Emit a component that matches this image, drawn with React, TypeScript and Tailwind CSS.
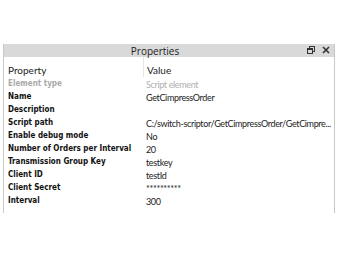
const rows: { label: string; value: string; dim?: boolean }[] = [
  { label: "Element type", value: "Script element", dim: true },
  { label: "Name", value: "GetCimpressOrder" },
  { label: "Description", value: "" },
  { label: "Script path", value: "C:/switch-scriptor/GetCimpressOrder/GetCimpre..." },
  { label: "Enable debug mode", value: "No" },
  { label: "Number of Orders per Interval", value: "20" },
  { label: "Transmission Group Key", value: "testkey" },
  { label: "Client ID", value: "testId" },
  { label: "Client Secret", value: "**********" },
  { label: "Interval", value: "300" },
];

export default function App() {
  return (
    <div className="w-[340px] h-[260px] bg-white pt-[44px] pl-[3px]">
      <div className="w-[332px] border-x border-[#c8c8c8] bg-white">
        <div className="h-[13px] bg-[#d9d9d9] flex items-center relative">
          <span className="flex-1 text-center text-[10px] leading-none text-[#222] font-['Open_Sans',sans-serif] mr-[28px]">
            Properties
          </span>
          <div className="absolute right-[4px] top-[2px] flex items-center gap-[7px]">
            <svg width="8" height="8" viewBox="0 0 8 8">
              <rect x="2.5" y="0.5" width="5" height="5" fill="none" stroke="#333" />
              <rect x="0" y="2" width="6" height="6" fill="#333" />
              <rect x="1" y="4" width="4" height="3" fill="#d9d9d9" />
            </svg>
            <svg width="8" height="8" viewBox="0 0 8 8">
              <path d="M1 1 L7 7 M7 1 L1 7" stroke="#333" strokeWidth="1.6" />
            </svg>
          </div>
        </div>
        <div className="flex h-[20px] font-['Lato',sans-serif] text-[10px] text-[#222]">
          <span className="w-[139px] pl-[4px] pt-[6px]">Property</span>
          <span className="pl-[3px] pt-[6px] border-l border-[#e6e6e6] h-full">Value</span>
        </div>
        <div className="pb-[6px]">
          {rows.map((r) => (
            <div key={r.label} className="flex h-[13px] items-center">
              <span
                className={`w-[140px] shrink-0 overflow-hidden pl-[4px] font-['DejaVu_Sans_Condensed','DejaVu_Sans',sans-serif] font-bold text-[8px] whitespace-nowrap ${
                  r.dim ? "text-[#aaa]" : "text-[#111]"
                }`}
              >
                {r.label}
              </span>
              <span
                className={`min-w-0 pl-[2px] pt-[3px] pr-[2px] font-['Lato',sans-serif] text-[9px] tracking-[-0.35px] whitespace-nowrap overflow-hidden ${
                  r.dim ? "text-[#b0b0b0]" : "text-[#222]"
                }`}
              >
                {r.value}
              </span>
            </div>
          ))}
        </div>
      </div>
    </div>
  );
}
